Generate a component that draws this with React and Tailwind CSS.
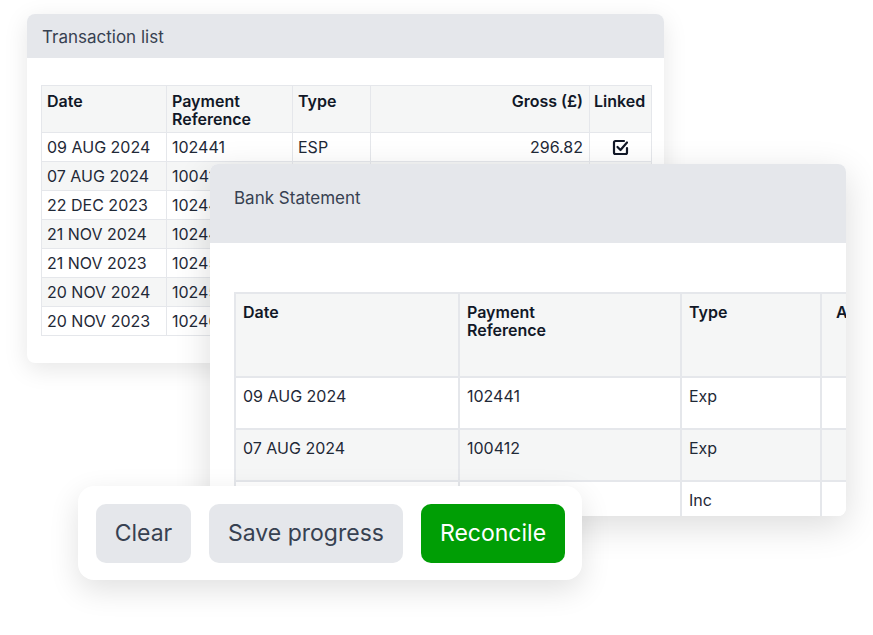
import React from "react";

const txRows = [
  ["09 AUG 2024", "102441", "ESP", "296.82", true],
  ["07 AUG 2024", "100412", "Exp", "120.00", false],
  ["22 DEC 2023", "102444", "Inc", "88.40", false],
  ["21 NOV 2024", "102448", "Exp", "42.10", false],
  ["21 NOV 2023", "102451", "Inc", "310.00", false],
  ["20 NOV 2024", "102455", "Exp", "64.25", false],
  ["20 NOV 2023", "102460", "Inc", "19.99", false],
];

const bankRows = [
  ["09 AUG 2024", "102441", "Exp"],
  ["07 AUG 2024", "100412", "Exp"],
  ["", "", "Inc"],
];

function CheckedBox() {
  return (
    <svg width="17" height="17" viewBox="0 0 17 17" fill="none" stroke="#111827" strokeWidth="2.2" strokeLinecap="round" strokeLinejoin="round">
      <path d="M12 2H3.5A1.5 1.5 0 0 0 2 3.5v10A1.5 1.5 0 0 0 3.5 15h10a1.5 1.5 0 0 0 1.5-1.5V9" />
      <path d="M5.5 8l3 3L15 3.5" />
    </svg>
  );
}

export default function App() {
  return (
    <div className="relative w-[873px] h-[635px] bg-white overflow-hidden text-[#1f2937]" style={{ fontFamily: "Inter, 'Noto Sans', sans-serif" }}>
      {/* Transaction list card */}
      <div className="absolute left-[27px] top-[14px] w-[637px] h-[349px] rounded-lg bg-white shadow-[0_6px_24px_rgba(0,0,0,0.10)] overflow-hidden">
        <div className="h-[44px] bg-[#e5e7eb] px-[15px] pt-[12px] text-[17px] leading-[22px] text-[#374151]">
          Transaction list
        </div>
        <div className="px-[14px] pt-[27px]">
          <table className="border-collapse text-[16px] leading-[18px] w-[610px] table-fixed">
            <colgroup>
              <col className="w-[125px]" />
              <col className="w-[126px]" />
              <col className="w-[78px]" />
              <col className="w-[219px]" />
              <col className="w-[62px]" />
            </colgroup>
            <thead>
              <tr className="bg-[#f5f6f6] h-[47px] align-top text-[#111827]">
                <th className="border border-[#e5e7eb] px-[5px] pt-[6px] text-left font-semibold">Date</th>
                <th className="border border-[#e5e7eb] px-[5px] pt-[6px] text-left font-semibold">Payment Reference</th>
                <th className="border border-[#e5e7eb] px-[5px] pt-[6px] text-left font-semibold">Type</th>
                <th className="border border-[#e5e7eb] px-[6px] pt-[6px] text-right font-semibold">Gross (£)</th>
                <th className="border border-[#e5e7eb] px-[4px] pt-[6px] text-left font-semibold">Linked</th>
              </tr>
            </thead>
            <tbody>
              {txRows.map((r, i) => (
                <tr key={i} className={`h-[29px] ${i % 2 === 1 ? "bg-[#f5f6f6]" : "bg-white"}`}>
                  <td className="border border-[#e5e7eb] px-[5px] whitespace-nowrap">{r[0]}</td>
                  <td className="border border-[#e5e7eb] px-[5px]">{r[1]}</td>
                  <td className="border border-[#e5e7eb] px-[5px]">{r[2]}</td>
                  <td className="border border-[#e5e7eb] px-[6px] text-right">{r[3]}</td>
                  <td className="border border-[#e5e7eb] px-[4px]">
                    {r[4] && (
                      <div className="flex justify-center">
                        <CheckedBox />
                      </div>
                    )}
                  </td>
                </tr>
              ))}
            </tbody>
          </table>
        </div>
      </div>

      {/* Bank statement card */}
      <div className="absolute left-[210px] top-[164px] w-[636px] h-[352px] rounded-lg bg-white shadow-[0_10px_36px_rgba(0,0,0,0.14)] overflow-hidden">
        <div className="h-[79px] bg-[#e5e7eb] px-[24px] pt-[23px] text-[17px] leading-[22px] text-[#374151]">
          Bank Statement
        </div>
        <div className="pl-[24px] pt-[49px]">
          <table className="border-collapse text-[16px] leading-[18px] w-[720px] table-fixed">
            <colgroup>
              <col className="w-[224px]" />
              <col className="w-[222px]" />
              <col className="w-[140px]" />
              <col className="w-[134px]" />
            </colgroup>
            <thead>
              <tr className="bg-[#f5f6f6] h-[84px] align-top text-[#111827]">
                <th className="border-2 border-[#e5e7eb] px-[7px] pt-[9px] text-left font-semibold">Date</th>
                <th className="border-2 border-[#e5e7eb] px-[7px] pt-[9px] text-left font-semibold">
                  <span className="block w-[100px]">Payment Reference</span>
                </th>
                <th className="border-2 border-[#e5e7eb] px-[7px] pt-[9px] text-left font-semibold">Type</th>
                <th className="border-2 border-[#e5e7eb] px-[14px] pt-[9px] text-left font-semibold">Amount</th>
              </tr>
            </thead>
            <tbody>
              {bankRows.map((r, i) => (
                <tr key={i} className={`h-[52px] align-top ${i % 2 === 1 ? "bg-[#f5f6f6]" : "bg-white"}`}>
                  <td className="border-2 border-[#e5e7eb] px-[7px] pt-[9px]">{r[0]}</td>
                  <td className="border-2 border-[#e5e7eb] px-[7px] pt-[9px]">{r[1]}</td>
                  <td className="border-2 border-[#e5e7eb] px-[7px] pt-[9px]">{r[2]}</td>
                  <td className="border-2 border-[#e5e7eb] px-[7px] pt-[9px]"></td>
                </tr>
              ))}
            </tbody>
          </table>
        </div>
      </div>

      {/* Action buttons */}
      <div className="absolute left-[78px] top-[486px] w-[504px] h-[94px] rounded-2xl bg-white shadow-[0_10px_30px_rgba(0,0,0,0.12)] flex items-center gap-[18px] pl-[18px]">
        <button className="h-[59px] w-[95px] rounded-[10px] bg-[#e5e7eb] text-[23px] text-[#374151]">Clear</button>
        <button className="h-[59px] w-[194px] rounded-[10px] bg-[#e5e7eb] text-[23px] text-[#374151]">Save progress</button>
        <button className="h-[59px] w-[144px] rounded-[10px] bg-[#009e05] text-[23px] text-white">Reconcile</button>
      </div>
    </div>
  );
}
